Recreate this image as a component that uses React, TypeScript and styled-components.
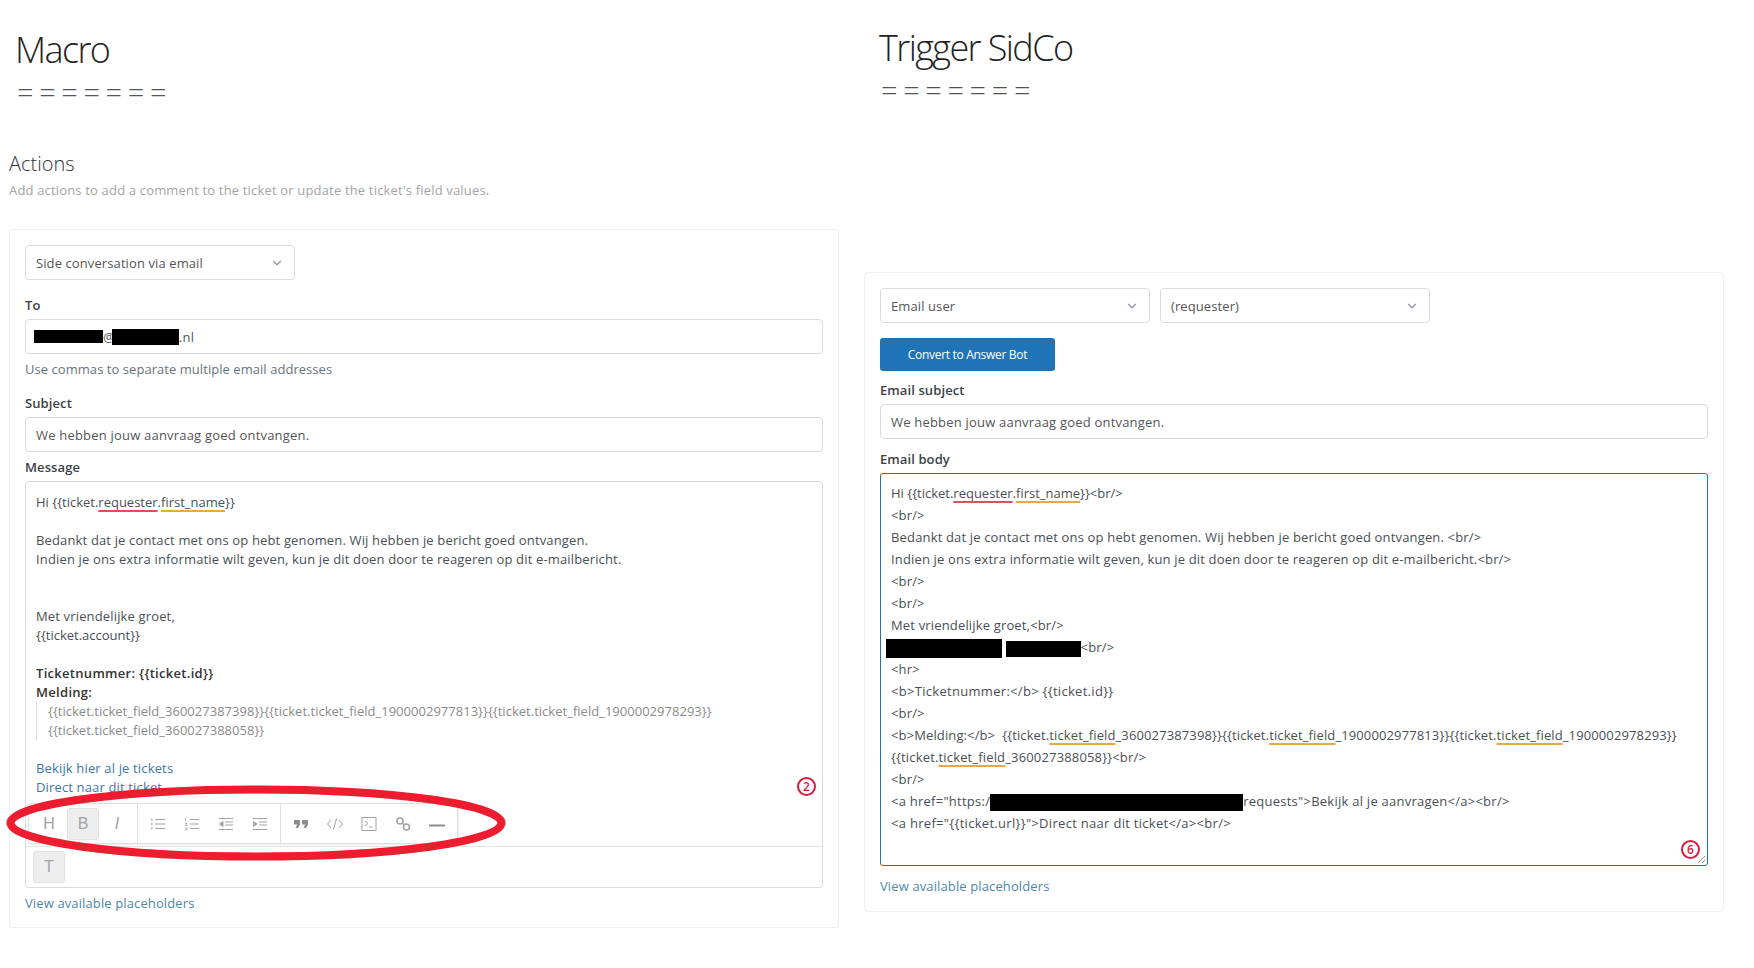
import styled, { createGlobalStyle } from 'styled-components'
import { ChevronDown } from 'lucide-react'

const Global = createGlobalStyle`
  html, body { margin: 0; padding: 0; background: #fff; }
  body { font-family: "Open Sans", "Liberation Sans", sans-serif; }
`

const Page = styled.div`
  display: flex;
  gap: 25px;
  width: 1754px;
  height: 968px;
  padding-left: 9px;
  box-sizing: border-box;
  overflow: hidden;
`

const Column = styled.div<{ $width: number }>`
  width: ${p => p.$width}px;
  flex: none;
`

const Title = styled.h1<{ $top: number; $left: number }>`
  margin: ${p => p.$top}px 0 0 ${p => p.$left}px;
  font-size: 36px;
  font-weight: 300;
  line-height: 44px;
  height: 44px;
  letter-spacing: -1.6px;
  color: #222;
`

const Equals = styled.div<{ $left: number }>`
  margin: 6px 0 0 ${p => p.$left}px;
  height: 28px;
  font-size: 29px;
  font-weight: 300;
  line-height: 28px;
  letter-spacing: 5.6px;
  color: #555;
`

const SectionTitle = styled.h2`
  margin: 44px 0 0;
  font-size: 20px;
  font-weight: 300;
  line-height: 28px;
  color: #333;
`

const SectionHint = styled.p`
  margin: 3px 0 0;
  font-size: 13px;
  line-height: 18px;
  letter-spacing: 0.17px;
  color: #a5a5a5;
`

const Panel = styled.div<{ $top: number; $height: number }>`
  margin-top: ${p => p.$top}px;
  height: ${p => p.$height}px;
  box-sizing: border-box;
  padding: 15px 15px 0;
  border: 1px solid #f0f1f2;
  border-radius: 4px;
  background: #fff;
`

const SelectRow = styled.div`
  display: flex;
  gap: 10px;
`

const Select = styled.div<{ $width: number }>`
  display: flex;
  align-items: center;
  justify-content: space-between;
  width: ${p => p.$width}px;
  height: 35px;
  box-sizing: border-box;
  padding: 0 10px;
  border: 1px solid #d8dcde;
  border-radius: 4px;
  font-size: 13px;
  letter-spacing: 0.1px;
  color: #555;
  svg { color: #87929d; }
`

const Label = styled.div<{ $top: number }>`
  margin-top: ${p => p.$top}px;
  height: 20px;
  font-size: 13px;
  font-weight: 600;
  line-height: 20px;
  letter-spacing: 0.1px;
  color: #3a4248;
`

const Field = styled.div`
  display: flex;
  align-items: center;
  height: 35px;
  margin-top: 4px;
  box-sizing: border-box;
  padding: 0 10px;
  border: 1px solid #d8dcde;
  border-radius: 4px;
  font-size: 13px;
  letter-spacing: 0.2px;
  color: #555;
`

const FieldHint = styled.div`
  margin-top: 6px;
  height: 18px;
  font-size: 13px;
  line-height: 18px;
  letter-spacing: 0.05px;
  color: #68737d;
`

const Redact = styled.span<{ $w: number; $h: number; $ml?: number }>`
  display: inline-block;
  width: ${p => p.$w}px;
  height: ${p => p.$h}px;
  margin-left: ${p => p.$ml ?? 0}px;
  vertical-align: middle;
  background: #000;
`

const Editor = styled.div`
  position: relative;
  height: 407px;
  margin-top: 4px;
  box-sizing: border-box;
  border: 1px solid #d8dcde;
  border-radius: 4px;
  display: flex;
  flex-direction: column;
`

const EditorBody = styled.div`
  flex: 1;
  overflow: hidden;
  padding: 11px 10px 0;
  border-bottom: 1px solid #e3e5e7;
  font-size: 13px;
  line-height: 19px;
  color: #4a4f55;
`

const Line = styled.div<{ $spacing?: number }>`
  height: 19px;
  white-space: nowrap;
  letter-spacing: ${p => p.$spacing ?? 0.15}px;
`

const Strong = styled.strong`
  font-weight: 600;
  letter-spacing: 0.3px;
  color: #333;
`

const Quote = styled.div`
  padding-left: 11px;
  border-left: 1px solid #ddd;
  color: #8b8b8b;
`

const EditorLink = styled.span`
  color: #3a77a8;
`

const EditorFooter = styled.div`
  display: flex;
  padding: 4px 7px;
`

const FormatButton = styled.div<{ $active?: boolean }>`
  display: flex;
  align-items: center;
  justify-content: center;
  width: 32px;
  height: 32px;
  box-sizing: border-box;
  border-radius: 3px;
  font-family: "Liberation Sans", sans-serif;
  font-size: 16px;
  color: #a3a3a3;
  background: ${p => (p.$active ? '#eeeeee' : 'transparent')};
  border: 1px solid ${p => (p.$active ? '#e2e2e2' : 'transparent')};
`

const Toolbar = styled.div`
  position: absolute;
  left: 2px;
  top: 321px;
  display: flex;
  align-items: center;
  height: 41px;
  box-sizing: border-box;
  border: 1px solid #e0e0e0;
  border-radius: 3px;
  background: #fff;
  box-shadow: 1px 1px 2px rgba(0, 0, 0, 0.08);
`

const ToolGroup = styled.div`
  display: flex;
  align-items: center;
  gap: 2px;
  height: 100%;
  padding: 0 4px;
  & + & { border-left: 1px solid #e0e0e0; }
`

const Marked = styled.span<{ $tone: 'red' | 'orange' }>`
  text-decoration: underline;
  text-decoration-thickness: 2px;
  text-underline-offset: 3px;
  text-decoration-skip-ink: none;
  text-decoration-color: ${p => (p.$tone === 'red' ? '#d9545a' : '#e5a94a')};
`

const Ellipse = styled.svg`
  position: absolute;
  left: -18px;
  top: 304px;
  overflow: visible;
  pointer-events: none;
`

const Badge = styled.div<{ $right: number; $bottom: number }>`
  position: absolute;
  right: ${p => p.$right}px;
  bottom: ${p => p.$bottom}px;
  width: 19px;
  height: 19px;
  box-sizing: border-box;
  border: 2px solid #d81e3f;
  border-radius: 50%;
  font-size: 12px;
  font-weight: 600;
  line-height: 15px;
  text-align: center;
  color: #d81e3f;
  background: #fff;
`

const Placeholders = styled.div<{ $top: number }>`
  margin-top: ${p => p.$top}px;
  height: 18px;
  font-size: 13px;
  line-height: 18px;
  letter-spacing: 0.12px;
  color: #4d87a8;
`

const ConvertButton = styled.button`
  display: block;
  width: 175px;
  height: 33px;
  margin-top: 15px;
  padding: 0;
  border: 0;
  border-radius: 3px;
  font-family: inherit;
  font-size: 12px;
  letter-spacing: -0.3px;
  color: #fff;
  background: #1f73b7;
`

const Textarea = styled.div`
  position: relative;
  height: 393px;
  margin-top: 4px;
  box-sizing: border-box;
  overflow: hidden;
  padding: 8px 10px 0;
  border: 1px solid #1f73b7;
  border-radius: 3px;
  font-size: 13px;
  color: #4a4f55;
`

const SourceLine = styled.div<{ $spacing?: number }>`
  height: 22px;
  line-height: 22px;
  white-space: pre;
  letter-spacing: ${p => p.$spacing ?? 0.16}px;
`

const Grip = styled.svg`
  position: absolute;
  right: 1px;
  bottom: 1px;
`

const ToolIcon = ({ children }: { children: React.ReactNode }) => (
  <FormatButton>
    <svg width="18" height="18" viewBox="0 0 18 18" fill="none" stroke="#a3a3a3" strokeWidth="1">
      {children}
    </svg>
  </FormatButton>
)

const lines3 = (x: number) => <path d={`M${x} 4.5H16M${x} 9H16M${x} 13.5H16`} />

const TicketField = ({ id }: { id: string }) => (
  <>
    {'{{ticket.'}
    <Marked $tone="orange">ticket_field</Marked>
    {`_${id}}}`}
  </>
)

const App = () => {
  return (
    <Page>
      <Global />
      <Column $width={830}>
        <Title $top={28} $left={6}>Macro</Title>
        <Equals $left={8}>=======</Equals>
        <SectionTitle>Actions</SectionTitle>
        <SectionHint>Add actions to add a comment to the ticket or update the ticket's field values.</SectionHint>
        <Panel $top={30} $height={699}>
          <Select $width={270}>
            Side conversation via email
            <ChevronDown size={14} />
          </Select>
          <Label $top={15}>To</Label>
          <Field>
            <Redact $w={69} $h={13} $ml={-2} />
            @
            <Redact $w={67} $h={16} $ml={-3} />
            .nl
          </Field>
          <FieldHint>Use commas to separate multiple email addresses</FieldHint>
          <Label $top={15}>Subject</Label>
          <Field>We hebben jouw aanvraag goed ontvangen.</Field>
          <Label $top={5}>Message</Label>
          <Editor>
            <EditorBody>
              <Line $spacing={0}>Hi {'{{ticket.'}<Marked $tone="red">requester</Marked>.<Marked $tone="orange">first_name</Marked>{'}}'}</Line>
              <Line />
              <Line>Bedankt dat je contact met ons op hebt genomen. Wij hebben je bericht goed ontvangen.</Line>
              <Line>Indien je ons extra informatie wilt geven, kun je dit doen door te reageren op dit e-mailbericht.</Line>
              <Line />
              <Line />
              <Line>Met vriendelijke groet,</Line>
              <Line $spacing={0}>{'{{ticket.account}}'}</Line>
              <Line />
              <Line><Strong>Ticketnummer: {'{{ticket.id}}'}</Strong></Line>
              <Line><Strong>Melding:</Strong></Line>
              <Quote>
                <Line $spacing={0.02}>{'{{ticket.ticket_field_360027387398}}{{ticket.ticket_field_1900002977813}}{{ticket.ticket_field_1900002978293}}'}</Line>
                <Line $spacing={0.02}>{'{{ticket.ticket_field_360027388058}}'}</Line>
              </Quote>
              <Line />
              <Line><EditorLink>Bekijk hier al je tickets</EditorLink></Line>
              <Line><EditorLink>Direct naar dit ticket</EditorLink></Line>
            </EditorBody>
            <EditorFooter>
              <FormatButton $active>T</FormatButton>
            </EditorFooter>
            <Toolbar>
              <ToolGroup>
                <FormatButton>H</FormatButton>
                <FormatButton $active>B</FormatButton>
                <FormatButton as="i">I</FormatButton>
              </ToolGroup>
              <ToolGroup>
                <ToolIcon>
                  {lines3(6)}
                  <path d="M2 4.5h1.5M2 9h1.5M2 13.5h1.5" strokeWidth="1.6" />
                </ToolIcon>
                <ToolIcon>
                  {lines3(7)}
                  <path d="M2.5 3v3M2 8.5h2l-2 2h2M2 13h2M2 15h2M4 13v2" strokeWidth="0.8" />
                </ToolIcon>
                <ToolIcon>
                  <path d="M2 3.5H16M8 7H16M8 10H16M2 14.5H16" />
                  <path d="M6 6.5v5L2.5 9z" fill="#a3a3a3" />
                </ToolIcon>
                <ToolIcon>
                  <path d="M2 3.5H16M8 7H16M8 10H16M2 14.5H16" />
                  <path d="M2.5 6.5v5L6 9z" fill="#a3a3a3" />
                </ToolIcon>
              </ToolGroup>
              <ToolGroup>
                <ToolIcon>
                  <path d="M2 5h6v4.5L6 13H3.6l1.6-3.6H2zM10 5h6v4.5L14 13h-2.4l1.6-3.6H10z" fill="#8d8d8d" stroke="none" />
                </ToolIcon>
                <ToolIcon>
                  <path d="M5 5L1.5 9 5 13M13 5l3.5 4L13 13M10.5 3.5l-3 11" />
                </ToolIcon>
                <ToolIcon>
                  <rect x="2" y="2.5" width="14" height="13" />
                  <path d="M5 6l3 2.5L5 11M9 12h3.5" />
                </ToolIcon>
                <ToolIcon>
                  <circle cx="6" cy="6" r="3" strokeWidth="1.6" />
                  <circle cx="12.5" cy="12" r="3" strokeWidth="1.6" />
                  <path d="M8 8l2.5 2" strokeWidth="1.6" />
                </ToolIcon>
                <ToolIcon>
                  <path d="M1 10.5H17" strokeWidth="2" stroke="#8d8d8d" />
                </ToolIcon>
              </ToolGroup>
            </Toolbar>
            <Ellipse width="498" height="74" viewBox="0 0 498 74">
              <ellipse cx="248" cy="37" rx="245.5" ry="33.5" fill="none" stroke="#ed1c2e" strokeWidth="8" />
            </Ellipse>
            <Badge $right={6} $bottom={91}>2</Badge>
          </Editor>
          <Placeholders $top={6}>View available placeholders</Placeholders>
        </Panel>
      </Column>
      <Column $width={860}>
        <Title $top={26} $left={15}>Trigger SidCo</Title>
        <Equals $left={17}>=======</Equals>
        <Panel $top={168} $height={640}>
          <SelectRow>
            <Select $width={270}>
              Email user
              <ChevronDown size={14} />
            </Select>
            <Select $width={270}>
              (requester)
              <ChevronDown size={14} />
            </Select>
          </SelectRow>
          <ConvertButton>Convert to Answer Bot</ConvertButton>
          <Label $top={9}>Email subject</Label>
          <Field>We hebben jouw aanvraag goed ontvangen.</Field>
          <Label $top={10}>Email body</Label>
          <Textarea>
            <SourceLine $spacing={0}>Hi {'{{ticket.'}<Marked $tone="red">requester</Marked>.<Marked $tone="orange">first_name</Marked>{'}}<br/>'}</SourceLine>
            <SourceLine>{'<br/>'}</SourceLine>
            <SourceLine>{'Bedankt dat je contact met ons op hebt genomen. Wij hebben je bericht goed ontvangen. <br/>'}</SourceLine>
            <SourceLine>{'Indien je ons extra informatie wilt geven, kun je dit doen door te reageren op dit e-mailbericht.<br/>'}</SourceLine>
            <SourceLine>{'<br/>'}</SourceLine>
            <SourceLine>{'<br/>'}</SourceLine>
            <SourceLine>{'Met vriendelijke groet,<br/>'}</SourceLine>
            <SourceLine><Redact $w={116} $h={19} $ml={-5} /> <Redact $w={75} $h={16} />{'<br/>'}</SourceLine>
            <SourceLine>{'<hr>'}</SourceLine>
            <SourceLine $spacing={0.3}>{'<b>Ticketnummer:</b> {{ticket.id}}'}</SourceLine>
            <SourceLine>{'<br/>'}</SourceLine>
            <SourceLine $spacing={0.12}>{'<b>Melding:</b>  '}<TicketField id="360027387398" /><TicketField id="1900002977813" /><TicketField id="1900002978293" /></SourceLine>
            <SourceLine><TicketField id="360027388058" />{'<br/>'}</SourceLine>
            <SourceLine>{'<br/>'}</SourceLine>
            <SourceLine $spacing={0.25}>{'<a href="https:/'}<Redact $w={253} $h={17} />{'requests">Bekijk al je aanvragen</a><br/>'}</SourceLine>
            <SourceLine $spacing={0.3}>{'<a href="{{ticket.url}}">Direct naar dit ticket</a><br/>'}</SourceLine>
            <Badge $right={7} $bottom={6}>6</Badge>
            <Grip width="9" height="9" viewBox="0 0 9 9" stroke="#777" strokeWidth="0.8">
              <path d="M1 8L8 1M5 8L8 5" />
            </Grip>
          </Textarea>
          <Placeholders $top={11}>View available placeholders</Placeholders>
        </Panel>
      </Column>
    </Page>
  )
}

export default App
